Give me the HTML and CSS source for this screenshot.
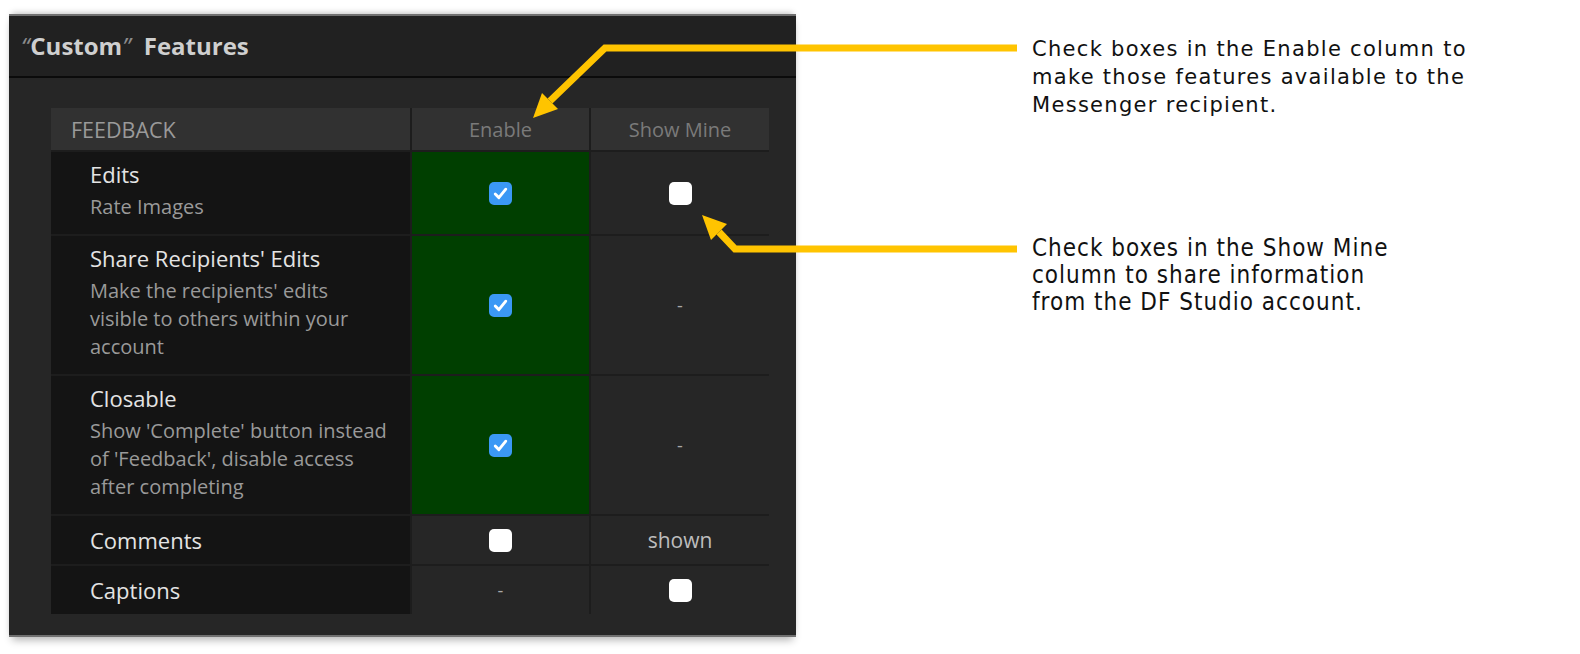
FILE: index.html
```html
<!DOCTYPE html>
<html lang="en">
<head>
  <meta charset="UTF-8" />
  <title>Custom Features</title>
  <link rel="stylesheet" href="styles.css">
</head>
<body>
  <div class="page">
    <div class="panel">
      <div class="panel-title"><span class="quote">“</span>Custom<span class="quote">”</span> Features</div>
      <div class="panel-body">
        <div class="features">
          <div class="cell head label">FEEDBACK</div>
          <div class="cell head">Enable</div>
          <div class="cell head">Show Mine</div>

          <div class="cell name">
            <div class="title">Edits</div>
            <div class="desc">Rate Images</div>
          </div>
          <div class="cell on"><span class="box checked"></span></div>
          <div class="cell"><span class="box"></span></div>

          <div class="cell name">
            <div class="title">Share Recipients' Edits</div>
            <div class="desc">Make the recipients' edits visible to others within your account</div>
          </div>
          <div class="cell on"><span class="box checked"></span></div>
          <div class="cell dash">-</div>

          <div class="cell name">
            <div class="title">Closable</div>
            <div class="desc">Show 'Complete' button instead of 'Feedback', disable access after completing</div>
          </div>
          <div class="cell on"><span class="box checked"></span></div>
          <div class="cell dash">-</div>

          <div class="cell name single">
            <div class="title">Comments</div>
          </div>
          <div class="cell"><span class="box"></span></div>
          <div class="cell shown">shown</div>

          <div class="cell name single">
            <div class="title">Captions</div>
          </div>
          <div class="cell dash">-</div>
          <div class="cell"><span class="box"></span></div>
        </div>
      </div>
    </div>

    <div class="notes">
      <p class="note note-enable">Check boxes in the Enable column to<br>make those features available to the<br>Messenger recipient.</p>
      <p class="note note-mine">Check boxes in the Show Mine<br>column to share information<br>from the DF Studio account.</p>
    </div>

    <svg class="arrows" width="1580" height="654" viewBox="0 0 1580 654">
      <polyline points="1017,48 605,48 550,101" />
      <polygon points="533,118 558,109 542,93" />
      <polyline points="1017,249 735,249 719,232" />
      <polygon points="702,215 727,224 711,240" />
    </svg>
  </div>
</body>
</html>
```

FILE: styles.css
```css
body {
  margin: 0;
  background: #fff;
  font-family: "Open Sans", sans-serif;
}
.page {
  position: relative;
  display: flex;
  align-items: flex-start;
  padding: 14px 0 0 9px;
  width: 1580px;
  height: 654px;
  box-sizing: border-box;
}
.panel {
  width: 787px;
  background: #262626;
  border-top: 2px solid #707070;
  border-bottom: 2px solid #707070;
  box-shadow: 0 -4px 6px -3px rgba(0, 0, 0, 0.25), 0 6px 8px -3px rgba(0, 0, 0, 0.3);
}
.panel-title {
  height: 60px;
  line-height: 60px;
  padding-left: 12px;
  background: #212121;
  border-bottom: 2px solid #0b0b0b;
  color: #cfcfcf;
  font-size: 24px;
  font-weight: 700;
}
.quote {
  color: #8c8c8c;
  font-weight: 400;
  font-style: italic;
  padding-right: 1px;
}
.quote + .quote {
  padding: 0 7px 0 0;
}
.panel-body {
  padding: 30px 27px 21px 42px;
}
.features {
  display: grid;
  grid-template-columns: 359px 177px 178px;
  gap: 2px;
  background: #1d1d1d;
}
.cell {
  background: #262626;
  display: flex;
  align-items: center;
  justify-content: center;
}
.cell.head {
  height: 42px;
  background: #313131;
  color: #7a7a7a;
  font-size: 20px;
}
.cell.label {
  justify-content: flex-start;
  padding-left: 20px;
  color: #9a9a9a;
  font-size: 21.5px;
}
.cell.name {
  display: block;
  background: #141414;
  padding: 8px 20px 13px 39px;
}
.cell.name.single {
  padding: 10px 20px 10px 39px;
}
.title {
  color: #e4e4e4;
  font-size: 22px;
  line-height: 28px;
}
.desc {
  margin-top: 5px;
  color: #9a9a9a;
  font-size: 20px;
  line-height: 28px;
}
.cell.on {
  background: #003f00;
}
.dash {
  color: #a8a8a8;
  font-size: 18px;
}
.shown {
  color: #bdbdbd;
  font-size: 21px;
}
.box {
  display: block;
  width: 23px;
  height: 23px;
  border-radius: 5px;
  background: #fff;
}
.box.checked {
  background: #3b98f5 url("data:image/svg+xml;utf8,<svg xmlns='http://www.w3.org/2000/svg' viewBox='0 0 24 24'><path d='M6.5 12.5 L10.3 16.3 L17.5 7.5' fill='none' stroke='white' stroke-width='3' stroke-linecap='round' stroke-linejoin='round'/></svg>") center / 100% no-repeat;
}
.notes {
  margin-left: 236px;
  padding-top: 21px;
}
.note {
  margin: 0;
  color: #111;
  white-space: nowrap;
}
.note-enable {
  font-family: "DejaVu Sans", Verdana, sans-serif;
  font-size: 21px;
  line-height: 28px;
  letter-spacing: 1.3px;
}
.note-mine {
  margin-top: 116px;
  font-family: "DejaVu Sans Condensed", "DejaVu Sans", sans-serif;
  font-size: 24px;
  line-height: 27px;
  letter-spacing: 1px;
}
.arrows {
  position: absolute;
  left: 0;
  top: 0;
  pointer-events: none;
}
.arrows polyline {
  fill: none;
  stroke: #ffc400;
  stroke-width: 7;
  stroke-linejoin: miter;
}
.arrows polygon {
  fill: #ffc400;
}
```
